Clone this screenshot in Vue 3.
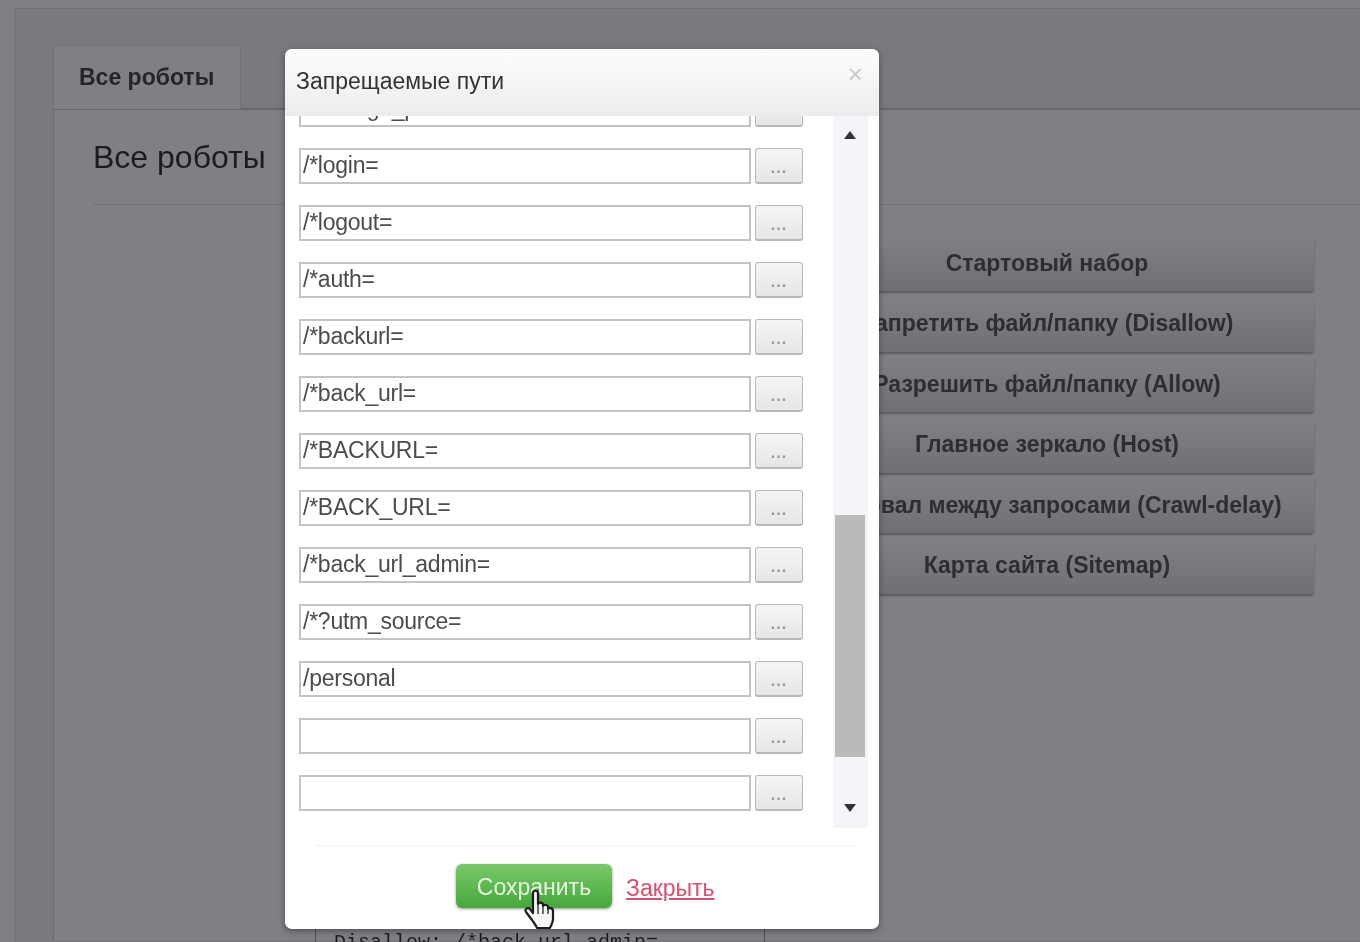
<script setup>
const paths = ['/*change_password=', '/*login=', '/*logout=', '/*auth=', '/*backurl=', '/*back_url=', '/*BACKURL=', '/*BACK_URL=', '/*back_url_admin=', '/*?utm_source=', '/personal', '', '']
const actions = ['Стартовый набор', 'Запретить файл/папку (Disallow)', 'Разрешить файл/папку (Allow)', 'Главное зеркало (Host)', 'Интервал между запросами (Crawl-delay)', 'Карта сайта (Sitemap)']
</script>

<template>
  <div class="page">
    <div class="frame">
      <div class="tabs"><div class="tab">Все роботы</div></div>
      <div class="panel">
        <h2 class="heading">Все роботы</h2>
        <div class="columns">
          <div class="left">
            <pre class="code">Disallow: /*back_url_admin=</pre>
          </div>
          <div class="actions">
            <button v-for="a in actions" :key="a" class="action" type="button">{{ a }}</button>
          </div>
        </div>
      </div>
    </div>

    <div class="modal">
      <div class="modal-head">
        <span class="modal-title">Запрещаемые пути</span>
        <span class="close">×</span>
      </div>
      <div class="scroll">
        <div class="rows">
          <div v-for="(p, i) in paths" :key="i" class="row">
            <div class="input">{{ p }}</div>
            <div class="more">...</div>
          </div>
        </div>
        <div class="bar">
          <span class="arrow up"></span>
          <span class="thumb"></span>
          <span class="arrow down"></span>
        </div>
      </div>
      <div class="foot">
        <button class="save" type="button">Сохранить</button>
        <a class="link">Закрыть</a>
      </div>
    </div>

    <svg class="cursor" width="34" height="42" viewBox="0 0 34 42">
      <path d="M9 4c0-3 5-3 5 0v11c1-2 5-2 5 1v1c1-2 5-1 5 1v2c1-2 5-1 5 2v8c0 4-2 6-3 9H13c-1-3-3-5-5-8L2 23c-2-3 2-5 4-3l3 4Z" fill="#f6f6f6" stroke="#1c1c1c" stroke-width="2.2" stroke-linejoin="round"/>
      <path d="M14 15v10M19 17v8M24 19v6" stroke="#333" stroke-width="1.4" fill="none"/>
    </svg>
  </div>
</template>

<style scoped>
.page {
  position: relative;
  width: 1360px;
  height: 942px;
  overflow: hidden;
  background: #7f8083;
  font-family: "Liberation Sans", Arial, sans-serif;
  filter: blur(0.6px);
}
.frame {
  box-sizing: border-box;
  height: 934px;
  margin: 8px 0 0 15px;
  padding: 36px 0 0 37px;
  background: #797a7d;
  border-top: 1px solid #6e6f72;
  border-left: 1px solid #737477;
}
.tabs {
  display: flex;
  height: 63px;
  border-bottom: 2px solid #66676a;
}
.tab {
  box-sizing: border-box;
  width: 188px;
  height: 64px;
  padding: 16px 0 0 25px;
  background: #7f8084;
  border: 1px solid #707174;
  border-bottom: 0;
  color: #242527;
  font-size: 23px;
  font-weight: 700;
  line-height: 30px;
}
.panel {
  box-sizing: border-box;
  height: 830px;
  padding: 0 0 0 39px;
  background: #7f8084;
  border-left: 1px solid #6c6d70;
}
.heading {
  box-sizing: border-box;
  height: 95px;
  margin: 0;
  padding: 27px 0 0;
  border-bottom: 1px solid #707174;
  color: #1c1c1e;
  font-size: 32px;
  font-weight: 400;
  line-height: 40px;
}
.columns {
  display: flex;
  justify-content: space-between;
  padding-right: 46px;
}
.left {
  padding: 721px 0 0 222px;
}
.code {
  box-sizing: border-box;
  width: 450px;
  height: 40px;
  margin: 0;
  padding: 5px 0 0 18px;
  border-left: 1px solid #4b4c4e;
  border-right: 1px solid #4b4c4e;
  color: #1d1d1f;
  font-family: "Liberation Mono", monospace;
  font-size: 20px;
  line-height: 24px;
}
.actions {
  display: flex;
  flex-direction: column;
  gap: 4.5px;
  width: 534px;
  padding-top: 30px;
}
.action {
  height: 56px;
  padding: 0;
  border: 0;
  border-radius: 4px;
  background: linear-gradient(#808184, #6f7073);
  box-shadow: 0 2px 2px #5a5b5e;
  color: #2d2e31;
  font-family: inherit;
  font-size: 23px;
  font-weight: 700;
  white-space: nowrap;
}
.modal {
  position: absolute;
  top: 49px;
  left: 285px;
  width: 594px;
  height: 880px;
  display: flex;
  flex-direction: column;
  overflow: hidden;
  background: #fff;
  border-radius: 7px;
  box-shadow: 0 2px 6px rgba(30, 30, 30, 0.5);
}
.modal-head {
  display: flex;
  flex: none;
  justify-content: space-between;
  height: 67px;
  background: linear-gradient(#fdfdfd, #ebeced);
  color: #333;
  position: relative;
  z-index: 1;
}
.modal-title {
  padding: 18px 0 0 11px;
  font-size: 23px;
  line-height: 28px;
}
.close {
  padding: 10px 16px 0 0;
  color: #c8c9cb;
  font-size: 26px;
  line-height: 30px;
}
.scroll {
  display: flex;
  flex: none;
  justify-content: space-between;
  height: 712px;
  margin: 0 11px 0 14px;
  overflow: hidden;
}
.rows {
  display: flex;
  flex-direction: column;
  gap: 21px;
  margin-top: -25px;
}
.row {
  display: flex;
  gap: 4px;
  height: 36px;
}
.input {
  box-sizing: border-box;
  width: 452px;
  height: 36px;
  padding: 0 0 0 2px;
  background: #fff;
  border: 2px solid #c4c4c4;
  color: #4c4c4c;
  font-size: 23px;
  line-height: 30px;
  letter-spacing: -0.25px;
  white-space: nowrap;
}
.more {
  box-sizing: border-box;
  width: 48px;
  height: 36px;
  background: linear-gradient(#f5f5f6, #e6e6e9);
  border: 1px solid #b8b8ba;
  border-bottom-width: 2px;
  border-radius: 3px;
  color: #98989a;
  font-size: 16px;
  font-weight: 700;
  line-height: 38px;
  letter-spacing: 1px;
  text-align: center;
}
.bar {
  position: relative;
  flex: none;
  width: 35px;
  height: 712px;
  background: #f6f4f8;
}
.thumb {
  position: absolute;
  top: 399px;
  left: 2px;
  width: 30px;
  height: 242px;
  background: #bababa;
}
.arrow {
  position: absolute;
  left: 11px;
  width: 0;
  height: 0;
  border-left: 6.5px solid transparent;
  border-right: 6.5px solid transparent;
}
.up {
  top: 15px;
  border-bottom: 8px solid #333;
}
.down {
  top: 688px;
  border-top: 8px solid #333;
}
.foot {
  display: flex;
  flex: 1;
  align-items: flex-start;
  gap: 14px;
  margin: 17px 22px 0 30px;
  padding: 18px 0 0 141px;
  border-top: 1px solid #f2f2f2;
}
.save {
  width: 156px;
  height: 44px;
  padding: 3px 0 0;
  border: 0;
  border-radius: 6px;
  background: linear-gradient(#7bc86a, #45a83c);
  box-shadow: 0 1px 3px rgba(60, 90, 60, 0.6);
  color: #e6f6df;
  font-family: inherit;
  font-size: 23px;
}
.link {
  padding-top: 9px;
  color: #d8506e;
  font-size: 23px;
  line-height: 30px;
  text-decoration: underline;
}
.cursor {
  position: absolute;
  top: 889px;
  left: 524px;
}
</style>

<style>
html, body { margin: 0; background: #7f8083; }
</style>
